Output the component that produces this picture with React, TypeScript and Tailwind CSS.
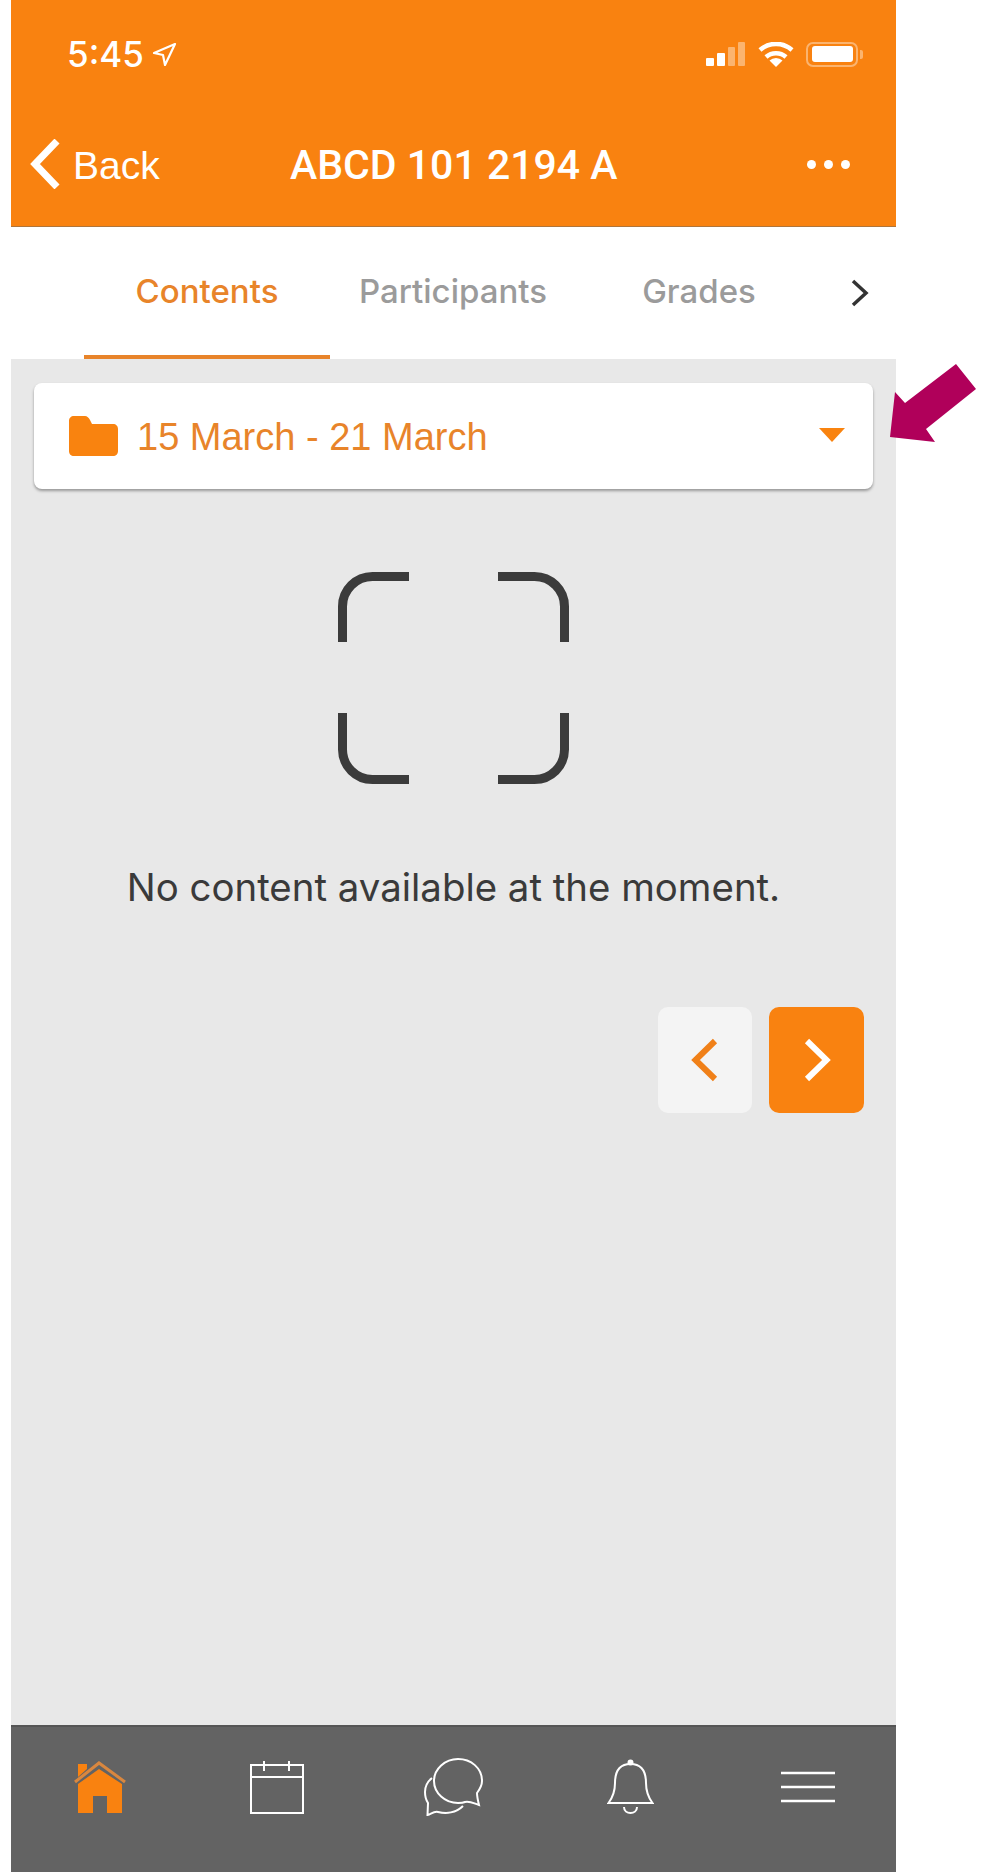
import React from 'react';

const sans = "font-['Liberation_Sans',Arial,sans-serif]";
const inter = "font-['Inter',sans-serif]";
const roboto = "font-['Roboto',sans-serif]";

function StatusBar() {
  return (
    <div className="flex h-[24px] items-center justify-between pl-[56px] pr-[33px] text-white">
      <div className="flex items-center gap-[8px]">
        <span className={`${inter} text-[35px] font-medium leading-none`}>5:45</span>
        <svg width="26" height="25" viewBox="0 0 26 25" fill="none" stroke="white" strokeWidth="2.200" strokeLinejoin="round">
          <path d="M23 2 L2 11 L11 13 L13 23 Z" />
        </svg>
      </div>
      <div className="flex items-center">
        <div className="flex items-end gap-[3px]">
          <div className="h-[8px] w-[8px] rounded-[1px] bg-white" />
          <div className="h-[13px] w-[8px] rounded-[1px] bg-white" />
          <div className="h-[19px] w-[7px] rounded-[1px] bg-white/40" />
          <div className="h-[24px] w-[7px] rounded-[1px] bg-white/40" />
        </div>
        <svg className="ml-[13px]" width="36" height="25" viewBox="0 0 36 25" fill="none" stroke="white" strokeWidth="4.500">
          <path d="M2 8 A24 24 0 0 1 34 8" />
          <path d="M8 15 A15 15 0 0 1 28 15" />
          <path d="M18 25 L11.500 18.500 A9.500 9.500 0 0 1 24.500 18.500 Z" fill="white" stroke="none" />
        </svg>
        <div className="ml-[12px] flex items-center">
          <div className="flex h-[25px] w-[52px] items-center justify-center rounded-[7px] border-[2px] border-white/40">
            <div className="h-[16px] w-[41px] rounded-[3px] bg-white" />
          </div>
          <div className="ml-[2px] h-[9px] w-[3px] rounded-r-[2px] bg-white/40" />
        </div>
      </div>
    </div>
  );
}

function NavBar() {
  return (
    <div className="relative mt-[73px] flex h-[50px] items-center justify-between pl-[18px] pr-[46px] text-white">
      <div className="flex items-center gap-[12px]">
        <svg width="32" height="50" viewBox="0 0 32 50" fill="none" stroke="white" strokeWidth="7">
          <path d="M28 2 L6 25 L28 48" />
        </svg>
        <span className="pt-[3px] text-[39px] leading-none">Back</span>
      </div>
      <span className={`${roboto} absolute left-[279px] top-[6px] text-[41px] font-medium leading-none`}>ABCD 101 2194 A</span>
      <div className="flex items-center gap-[8px]">
        <div className="h-[9px] w-[9px] rounded-full bg-white" />
        <div className="h-[9px] w-[9px] rounded-full bg-white" />
        <div className="h-[9px] w-[9px] rounded-full bg-white" />
      </div>
    </div>
  );
}

function Tabs() {
  return (
    <div className={`${inter} flex h-[132px] items-stretch bg-white pl-[73px] text-[33px] font-[450]`}>
      <div className="flex w-[246px] items-center justify-center border-b-[4px] border-[#e8842a] pt-[1px] text-[#e8842a]">
        Contents
      </div>
      <div className="flex w-[246px] items-center justify-center pb-[3px] text-[#9b9b9b]">Participants</div>
      <div className="flex w-[246px] items-center justify-center pb-[3px] text-[#9b9b9b]">Grades</div>
      <div className="flex items-center pl-[28px]">
        <svg width="20" height="28" viewBox="0 0 20 28" fill="none" stroke="#333333" strokeWidth="3.500">
          <path d="M3 2 L16 14 L3 26" />
        </svg>
      </div>
    </div>
  );
}

function WeekSelect() {
  return (
    <div className="mx-[23px] mt-[24px] flex h-[106px] items-center rounded-[8px] bg-white pl-[35px] pr-[28px] shadow-[0_2px_3px_rgba(0,0,0,0.35)]">
      <svg width="49" height="40" viewBox="0 0 49 40" fill="#f9830f">
        <path d="M5 0H16C18 0 20 2 21 4L23 8H44C47 8 49 10 49 13V35C49 38 47 40 44 40H5C2 40 0 38 0 35V5C0 2 2 0 5 0Z" />
      </svg>
      <span className="ml-[19px] flex-1 pt-[2px] text-[38px] leading-none text-[#e8842a]">15 March - 21 March</span>
      <svg className="mb-[2px]" width="26" height="14" viewBox="0 0 26 14" fill="#f9830f">
        <path d="M0 0H26L13 14Z" />
      </svg>
    </div>
  );
}

function EmptyState() {
  return (
    <div className="mt-[83px] flex flex-col items-center">
      <svg width="231" height="212" viewBox="0 0 231 212" fill="none" stroke="#3b3b3b" strokeWidth="9">
        <path d="M71 4.500H34.500A30 30 0 0 0 4.500 34.500V70" />
        <path d="M160 4.500H196.500A30 30 0 0 1 226.500 34.500V70" />
        <path d="M71 207.500H34.500A30 30 0 0 1 4.500 177.500V141" />
        <path d="M160 207.500H196.500A30 30 0 0 0 226.500 177.500V141" />
      </svg>
      <p className={`${inter} mt-[81px] text-[38.4px] leading-[44px] text-[#3a3a3a]`}>No content available at the moment.</p>
    </div>
  );
}

function Pager() {
  return (
    <div className="mt-[98px] flex justify-end gap-[17px] pr-[32px]">
      <button className="flex h-[106px] w-[94px] items-center justify-center rounded-[10px] bg-[#f4f4f4]">
        <svg width="30" height="46" viewBox="0 0 30 46" fill="none" stroke="#f08018" strokeWidth="6">
          <path d="M25 4 L5.500 23 L25 42" />
        </svg>
      </button>
      <button className="flex h-[106px] w-[95px] items-center justify-center rounded-[10px] bg-[#f98210]">
        <svg width="30" height="46" viewBox="0 0 30 46" fill="none" stroke="white" strokeWidth="6">
          <path d="M5 4 L24.500 23 L5 42" />
        </svg>
      </button>
    </div>
  );
}

function BottomBar() {
  return (
    <div className="grid h-[147px] grid-cols-5 border-t-[2px] border-[#555555] bg-[#636363] pt-[33px]">
      <div className="flex justify-center">
        <svg width="52" height="54" viewBox="0 0 52 54">
          <path d="M4 53V24L25 9L48 24V53H33V36H19V53Z" fill="#f98210" />
          <path d="M4 4H13V9L4 17Z" fill="#f98210" />
          <path d="M1 22L25 3L51 22" fill="none" stroke="#d9873f" strokeWidth="3" />
        </svg>
      </div>
      <div className="flex justify-center">
        <svg width="54" height="54" viewBox="0 0 54 54" fill="none" stroke="white" strokeWidth="2">
          <rect x="1" y="5" width="52" height="48" />
          <path d="M1 17H53" />
          <path d="M14 1V11" />
          <path d="M39 1V11" />
        </svg>
      </div>
      <div className="-mt-[2px] flex justify-center">
        <svg width="59" height="58" viewBox="0 0 59 58" fill="none" stroke="white" strokeWidth="2">
          <path d="M55 47C54 43 53 38 53 35C56 31 58 27 58 23C58 10 47 1 34 1C21 1 10 11 10 23C10 35 21 45 34 45C37 45 39 45 41 44C46 43 49 45 55 47Z" />
          <path d="M8 20C3 24 1 29 1 34C1 38 2 42 4 45L3.500 57C7 56 10 53 14 54C22 56 32 55 39 48" />
        </svg>
      </div>
      <div className="-mt-[1px] flex justify-center">
        <svg width="47" height="55" viewBox="0 0 47 55" fill="none" stroke="white" strokeWidth="2">
          <path d="M1.500 44C6 38 8 32 8 24C8 12 13 5 23.500 5C34 5 39 12 39 24C39 32 41 38 45.500 44Z" />
          <circle cx="23.500" cy="3.500" r="2" fill="white" />
          <path d="M17 48C17 56 30 56 30 48" />
        </svg>
      </div>
      <div className="flex justify-center pt-[11px]">
        <svg width="54" height="32" viewBox="0 0 54 32" stroke="white" strokeWidth="2.500">
          <path d="M0 2H54" />
          <path d="M0 16H54" />
          <path d="M0 30H54" />
        </svg>
      </div>
    </div>
  );
}

export default function App() {
  return (
    <div className={`relative h-[1872px] w-[994px] overflow-hidden bg-white pl-[11px] ${sans}`}>
      <div className="flex h-full w-[885px] flex-col">
        <header className="h-[227px] border-b-[1px] border-[#b0753a] bg-[#f98210] pt-[42px]">
          <StatusBar />
          <NavBar />
        </header>
        <Tabs />
        <main className="flex-1 bg-[#e8e8e8]">
          <WeekSelect />
          <EmptyState />
          <Pager />
        </main>
        <BottomBar />
      </div>
      {/* annotation arrow, drawn over the screenshot */}
      <svg className="absolute left-[888px] top-[362px]" width="92" height="84" viewBox="888 362 92 84" fill="#b0005a">
        <path d="M890 437L935 442L926 429L976 389L956 364L905 403L895 392Z" />
      </svg>
    </div>
  );
}
